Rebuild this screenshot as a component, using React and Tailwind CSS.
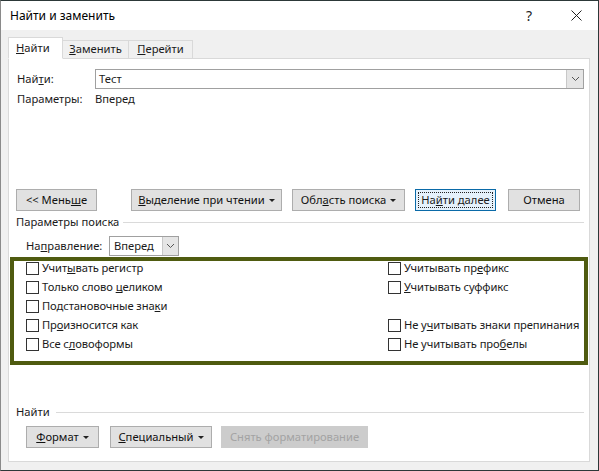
import React from 'react';

const font = { fontFamily: '"Noto Sans", "Open Sans", sans-serif' };

function Caret() {
  return (
    <svg width="6" height="3" viewBox="0 0 6 3" className="ml-[4px]">
      <path d="M0 0h6L3 3z" fill="#222" />
    </svg>
  );
}

function Chevron() {
  return (
    <svg width="9" height="6" viewBox="0 0 9 6">
      <path d="M1 1l3.5 3.5L8 1" fill="none" stroke="#555" strokeWidth="1" />
    </svg>
  );
}

function Btn({ w, children, caret, disabled, focused }) {
  if (focused) {
    return (
      <div className={`${w} h-[22px] border border-[#0a6aa8] bg-[#e5f1fb] p-[2px] flex`}>
        <div className="flex-1 border border-dotted border-[#222] flex items-center justify-center whitespace-nowrap">{children}</div>
      </div>
    );
  }
  return (
    <div
      className={`${w} h-[22px] border flex items-center justify-center whitespace-nowrap ${
        disabled ? 'bg-[#cccccc] border-[#cccccc] text-[#a3a3a3]' : 'bg-[#e1e1e1] border-[#adadad] text-[#111]'
      }`}
    >
      {children}
      {caret && <Caret />}
    </div>
  );
}

function Check({ children }) {
  return (
    <div className="h-[15px] flex items-center whitespace-nowrap tracking-[-0.1px]">
      <div className="w-[13px] h-[13px] shrink-0 border border-[#333] bg-white" />
      <span className="ml-[3px]">{children}</span>
    </div>
  );
}

export default function App() {
  return (
    <div
      style={font}
      className="w-[599px] h-[471px] bg-[#f0f0f0] border border-[#2c3838] border-l-[#8a8a8a] flex flex-col text-[11.2px] text-[#1a1a1a]"
    >
      {/* Title bar */}
      <div className="h-[29px] bg-white flex items-center pl-[9px] shrink-0">
        <span className="text-[12px] text-black">Найти и заменить</span>
        <span className="ml-auto text-[14px] text-[#222] mr-[39px]">?</span>
        <svg width="11" height="11" viewBox="0 0 11 11" className="mr-[16px]">
          <path d="M0.5 0.5l10 10M10.5 0.5l-10 10" stroke="#222" strokeWidth="1" />
        </svg>
      </div>

      {/* Tabs */}
      <div className="mt-[7px] ml-[7px] h-[21px] flex items-end relative z-10 shrink-0">
        <div className="w-[55px] h-[22px] mb-[-1px] bg-white border border-[#d9d9d9] border-b-white flex items-center pl-[7px]">
          <span><u>Н</u>айти</span>
        </div>
        <div className="w-[66px] h-[18px] bg-[#f0f0f0] border border-l-0 border-[#d9d9d9] border-b-0 flex items-center justify-center">
          <span><u>З</u>аменить</span>
        </div>
        <div className="w-[64px] h-[18px] bg-[#f0f0f0] border border-l-0 border-[#d9d9d9] border-b-0 flex items-center justify-center">
          <span><u>П</u>ерейти</span>
        </div>
      </div>

      {/* Panel */}
      <div className="ml-[7px] w-[582px] h-[404px] bg-white border border-[#d9d9d9] flex flex-col shrink-0">
        {/* Find row */}
        <div className="mt-[10px] ml-[8px] h-[20px] flex items-center">
          <div className="w-[78px]">Най<u>т</u>и:</div>
          <div className="w-[489px] h-[20px] border border-[#a0a0a0] flex items-center pl-[3px]">
            <span>Тест</span>
            <div className="ml-auto w-[17px] h-[18px] bg-[#e5e5e5] border-l border-[#c8c8c8] flex items-center justify-center">
              <Chevron />
            </div>
          </div>
        </div>
        <div className="mt-[3px] ml-[8px] h-[15px] flex items-center">
          <div className="w-[78px]">Параметры:</div>
          <span>Вперед</span>
        </div>

        {/* Buttons */}
        <div className="mt-[82px] ml-[7px] flex items-center">
          <Btn w="w-[81px]">{'<< Мень'}<u>ш</u>е</Btn>
          <div className="ml-[34px]">
            <Btn w="w-[151px]" caret>
              <u>В</u>ыделение при чтении
            </Btn>
          </div>
          <div className="ml-[10px]">
            <Btn w="w-[113px]" caret>
              Обл<u>а</u>сть поиска
            </Btn>
          </div>
          <div className="ml-[10px]">
            <Btn w="w-[81px]" focused>
              На<u>й</u>ти далее
            </Btn>
          </div>
          <div className="ml-[12px]">
            <Btn w="w-[72px]">Отмена</Btn>
          </div>
        </div>

        {/* Search params separator */}
        <div className="mt-[4px] ml-[7px] mr-[5px] h-[14px] flex items-center">
          <span>Параметры поиска</span>
          <div className="flex-1 h-px bg-[#dadada] ml-[4px]" />
        </div>

        {/* Direction */}
        <div className="mt-[7px] ml-[17px] h-[20px] flex items-center">
          <div className="w-[83px]">На<u>п</u>равление:</div>
          <div className="w-[70px] h-[20px] border border-[#a0a0a0] flex items-center pl-[4px]">
            <span>Вперед</span>
            <div className="ml-auto w-[16px] h-[18px] bg-[#e5e5e5] border-l border-[#c8c8c8] flex items-center justify-center">
              <Chevron />
            </div>
          </div>
        </div>

        {/* Options (highlighted) */}
        <div className="mt-px ml-px w-[578px] h-[108px] border-[4px] border-[#4f5b10] flex pl-[12px]">
          <div className="w-[362px] flex flex-col gap-[4px]">
            <Check>Учит<u>ы</u>вать регистр</Check>
            <Check>Только слово <u>ц</u>еликом</Check>
            <Check>Подстановочные зна<u>к</u>и</Check>
            <Check>Пр<u>о</u>износится как</Check>
            <Check>Все с<u>л</u>овоформы</Check>
          </div>
          <div className="flex flex-col gap-[4px]">
            <Check>Учитывать пр<u>е</u>фикс</Check>
            <Check><u>У</u>читывать суффикс</Check>
            <div className="h-[15px]" />
            <Check>Не у<u>ч</u>итывать знаки препинания</Check>
            <Check>Не учитывать про<u>б</u>елы</Check>
          </div>
        </div>

        {/* Find formatting */}
        <div className="mt-[40px] ml-[7px] mr-[5px] h-[14px] flex items-center">
          <span>Найти</span>
          <div className="flex-1 h-px bg-[#dadada] ml-[6px]" />
        </div>
        <div className="mt-[7px] ml-[17px] flex items-center">
          <Btn w="w-[73px]" caret>
            <u>Ф</u>ормат
          </Btn>
          <div className="ml-[11px]">
            <Btn w="w-[102px]" caret>
              <u>С</u>пециальный
            </Btn>
          </div>
          <div className="ml-[9px]">
            <Btn w="w-[147px]" disabled>
              Снять форматирование
            </Btn>
          </div>
        </div>
      </div>
    </div>
  );
}
